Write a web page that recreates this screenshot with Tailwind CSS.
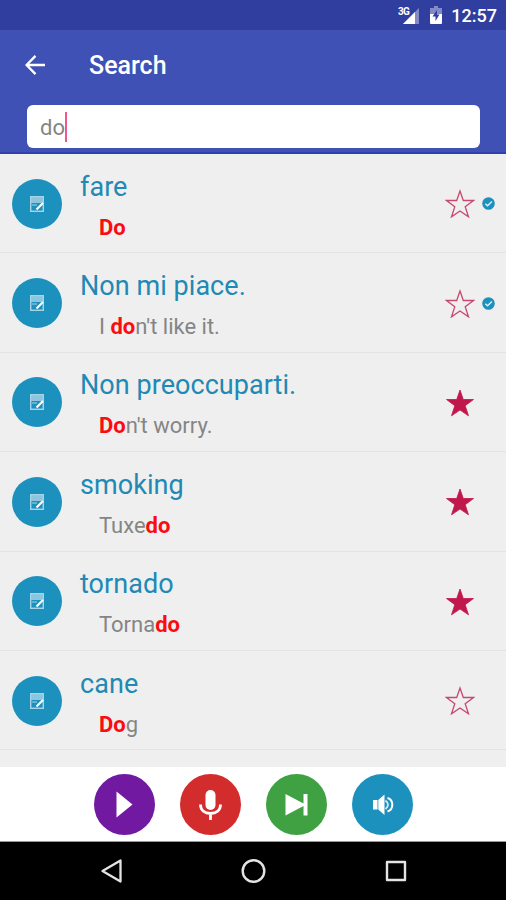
<!DOCTYPE html>
<html lang="en">
<head>
    <meta charset="UTF-8">
    <meta name="viewport" content="width=device-width, initial-scale=1.0">
    <title>Search</title>
    <script src="https://cdn.jsdelivr.net/npm/@tailwindcss/browser@4"></script>
</head>
<body class="w-[506px] h-[900px] overflow-hidden flex flex-col bg-[#efefef] font-[Roboto,sans-serif]">
    <!-- Status bar -->
    <div class="h-[30px] shrink-0 bg-[#303f9f] flex items-center justify-end pr-[9px] text-white">
        <svg class="w-[22px] h-[20px] mr-[10px]" viewBox="0 0 22 20">
            <path d="M21 3V19H5Z" fill="#fff" fill-opacity=".4"/>
            <path d="M17 7V19H5Z" fill="#fff"/>
            <text x="0" y="9.500" font-size="10" font-weight="700" letter-spacing="-.7" fill="#fff">3G</text>
        </svg>
        <svg class="w-[12px] h-[18px] mr-[9px]" viewBox="0 0 12 18">
            <path d="M4 0H8V2H12V8H0V2H4Z" fill="#fff" fill-opacity=".4"/>
            <path d="M0 8H12V17Q12 18 11 18H1Q0 18 0 17Z" fill="#fff"/>
            <path d="M7 4L2.500 10.500H5.500V15L9.500 8.500H7Z" fill="#303f9f"/>
        </svg>
        <span class="text-[18px] leading-none font-medium pt-[1px]">12:57</span>
    </div>

    <!-- Header -->
    <header class="h-[124px] shrink-0 bg-[#3f51b5] border-b-2 border-[#3040ae] text-white">
        <div class="h-[70px] flex items-center pl-[25px]">
            <svg class="w-[20px] h-[20px]" viewBox="0 0 20 20" fill="none" stroke="#fff" stroke-width="2.300">
                <path d="M20 10H2M10.500 .9L1.500 10L10.500 19.100"/>
            </svg>
            <h1 class="ml-[44px] text-[25px] leading-none font-medium">Search</h1>
        </div>
        <div class="ml-[27px] mt-[5px] w-[453px] h-[43px] rounded-[6px] bg-white flex items-center pl-[13px]">
            <span class="text-[22px] leading-none text-[#858585] pt-[2px]">do</span>
            <span class="w-[2px] h-[30px] bg-[#f0588a]"></span>
        </div>
    </header>

    <!-- Results -->
    <main id="results" class="h-[613px] shrink-0 overflow-hidden"></main>

    <!-- Player buttons -->
    <div class="h-[75px] shrink-0 bg-white border-b border-[#999] flex items-center justify-center gap-[25px]">
        <button class="w-[61px] h-[61px] rounded-full bg-[#7119a0]">
            <svg class="w-[61px] h-[61px]" viewBox="0 0 61 61"><path d="M22.500 17.500V43.500L38.500 30.500Z" fill="#fff"/></svg>
        </button>
        <button class="w-[61px] h-[61px] rounded-full bg-[#d32c2d]">
            <svg class="w-[61px] h-[61px]" viewBox="0 0 61 61">
                <rect x="25.500" y="16" width="10" height="20" rx="5" fill="#fff"/>
                <path d="M20.500 30.500C20.500 36.500 25 39.500 30.500 39.500S40.500 36.500 40.500 30.500M30.500 39.500V46" fill="none" stroke="#fff" stroke-width="2.800"/>
            </svg>
        </button>
        <button class="w-[61px] h-[61px] rounded-full bg-[#3fa142]">
            <svg class="w-[61px] h-[61px]" viewBox="0 0 61 61"><path d="M19.500 20V41.500L37.500 32V41.500H41.500V20H37.500V29.500Z" fill="#fff"/></svg>
        </button>
        <button class="w-[61px] h-[61px] rounded-full bg-[#1d91be]">
            <svg class="w-[61px] h-[61px]" viewBox="0 0 61 61">
                <path d="M21 26H25.500V35.500H21ZM26.300 26L32.500 20.500V41L26.300 35.500Z" fill="#fff"/>
                <path d="M33.500 26.500Q38.500 30.700 33.500 35" fill="none" stroke="#fff" stroke-opacity=".8" stroke-width="1.800"/>
                <path d="M35.500 24Q40.300 25.500 40.300 30.700T35.500 37.500" fill="none" stroke="#fff" stroke-width="2"/>
            </svg>
        </button>
    </div>

    <!-- Navigation bar -->
    <nav class="h-[58px] shrink-0 bg-black flex items-center pl-[100px]">
        <svg class="w-[23px] h-[26px]" viewBox="0 0 23 26" fill="none" stroke="#e4e4e4" stroke-width="2.300" stroke-linejoin="round"><path d="M20.500 2.500V23.500L2.500 13Z"/></svg>
        <svg class="w-[26px] h-[26px] ml-[118px]" viewBox="0 0 26 26" fill="none" stroke="#e4e4e4" stroke-width="2.400"><circle cx="12.500" cy="13" r="10.800"/></svg>
        <svg class="w-[22px] h-[22px] ml-[118px]" viewBox="0 0 22 22" fill="none" stroke="#e4e4e4" stroke-width="2.400" stroke-linejoin="round"><rect x="2" y="2" width="18" height="18"/></svg>
    </nav>

    <script>
        const query = 'do';
        const words = [
            { title: 'fare', text: 'Do', starred: false, learned: true },
            { title: 'Non mi piace.', text: "I don't like it.", starred: false, learned: true },
            { title: 'Non preoccuparti.', text: "Don't worry.", starred: true, learned: false },
            { title: 'smoking', text: 'Tuxedo', starred: true, learned: false },
            { title: 'tornado', text: 'Tornado', starred: true, learned: false },
            { title: 'cane', text: 'Dog', starred: false, learned: false }
        ];

        // Wrap the matched letters
        function highlight(text) {
            return text.replace(new RegExp(query, 'i'), '<b class="font-bold text-[#fa0c10]">$&</b>');
        }

        const noteIcon = `
            <svg class="w-[14px] h-[16px]" viewBox="0 0 14 16">
                <rect x=".6" y=".6" width="12.800" height="14.800" fill="#8ec5de" stroke="#a5d3e8" stroke-width="1.200"/>
                <path d="M1.500 7H12.500V14.500H1.500Z" fill="#1d91be"/>
                <path d="M2 9H7" stroke="#a5d3e8" stroke-width="1"/>
                <path d="M6.500 13.500L13 7" stroke="#fff" stroke-width="2.200"/>
            </svg>`;

        const starPath = 'M14 1L17.300 10.500H27.500L19.200 16.700L22.500 26.800L14 21L5.500 26.800L8.800 16.700L.5 10.500H10.700Z';
        const starFull = `<svg class="w-[30px] h-[29px]" viewBox="-1 -1 30 29"><path d="${starPath}" fill="#c0174c" stroke="#c0174c" stroke-width=".8"/></svg>`;
        const starEmpty = `<svg class="w-[30px] h-[29px]" viewBox="-1 -1 30 29"><path d="${starPath}" fill="none" stroke="#c8486f" stroke-width="1.300"/></svg>`;
        const check = `
            <svg class="w-[13px] h-[13px]" viewBox="0 0 13 13">
                <circle cx="6.500" cy="6.500" r="6.300" fill="#1d91be"/>
                <path d="M3.300 6.700L5.600 8.800L9.900 4.500" fill="none" stroke="#d9eef6" stroke-width="1.500"/>
            </svg>`;

        document.getElementById('results').innerHTML = words.map(word => `
            <div class="h-[99.4px] border-b border-[#e4e4e4] flex items-center pl-[12px] pt-[1px]">
                <div class="w-[50px] h-[50px] rounded-full bg-[#1d91be] flex items-center justify-center shrink-0">${noteIcon}</div>
                <div class="ml-[18px] w-[365px] shrink-0 pt-[5px]">
                    <p class="text-[27px] leading-[32px] h-[32px] text-[#2089b5] tracking-[0.05px]">${word.title}</p>
                    <p class="mt-[11px] ml-[19px] text-[22px] leading-[28px] h-[28px] text-[#858585]">${highlight(word.text)}</p>
                </div>
                ${word.starred ? starFull : starEmpty}
                <div class="ml-[7px] w-[13px]">${word.learned ? check : ''}</div>
            </div>
        `).join('');
    </script>
</body>
</html>
